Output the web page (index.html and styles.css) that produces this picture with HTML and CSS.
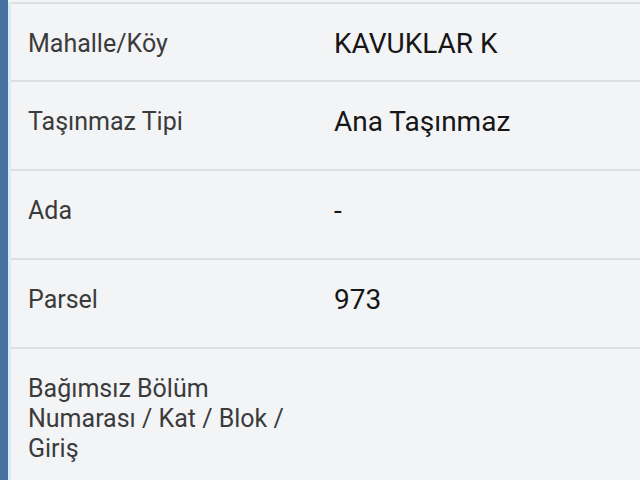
FILE: index.html
```html
<!DOCTYPE html>
<html lang="tr">
<head>
<meta charset="utf-8">
<title>Taşınmaz Bilgileri</title>
<link rel="stylesheet" href="styles.css">
</head>
<body>
<div class="panel">
  <div class="inner">
    <div class="row row-first">
      <div class="label">Mahalle/Köy</div>
      <div class="value">KAVUKLAR K</div>
    </div>
    <div class="row">
      <div class="label">Taşınmaz Tipi</div>
      <div class="value">Ana Taşınmaz</div>
    </div>
    <div class="row">
      <div class="label">Ada</div>
      <div class="value">-</div>
    </div>
    <div class="row">
      <div class="label">Parsel</div>
      <div class="value">973</div>
    </div>
    <div class="row">
      <div class="label">Bağımsız Bölüm Numarası / Kat / Blok / Giriş</div>
      <div class="value"></div>
    </div>
  </div>
</div>
</body>
</html>
```
FILE: styles.css
```css
html, body {
  margin: 0;
  padding: 0;
  background: #f3f4f6;
}
body {
  font-family: Roboto, "Noto Sans", "Liberation Sans", sans-serif;
  font-size: 25px;
  line-height: 30px;
  overflow: hidden;
  height: 480px;
}
.panel {
  border-left: 8px solid #46709f;
  min-height: 480px;
  box-sizing: border-box;
  padding-top: 2px;
}
.inner {
  border-left: 3px solid #d5eef4;
  min-height: 478px;
}
.row {
  display: grid;
  grid-template-columns: 280px 1fr;
  column-gap: 26px;
  border-top: 2px solid #dcdee1;
  padding: 25px 8px 32px 17px;
}
.row-first {
  padding-bottom: 21px;
}
.label {
  color: #3b3b3b;
}
.value {
  color: #161616;
  font-size: 28px;
  line-height: 30px;
}
```
